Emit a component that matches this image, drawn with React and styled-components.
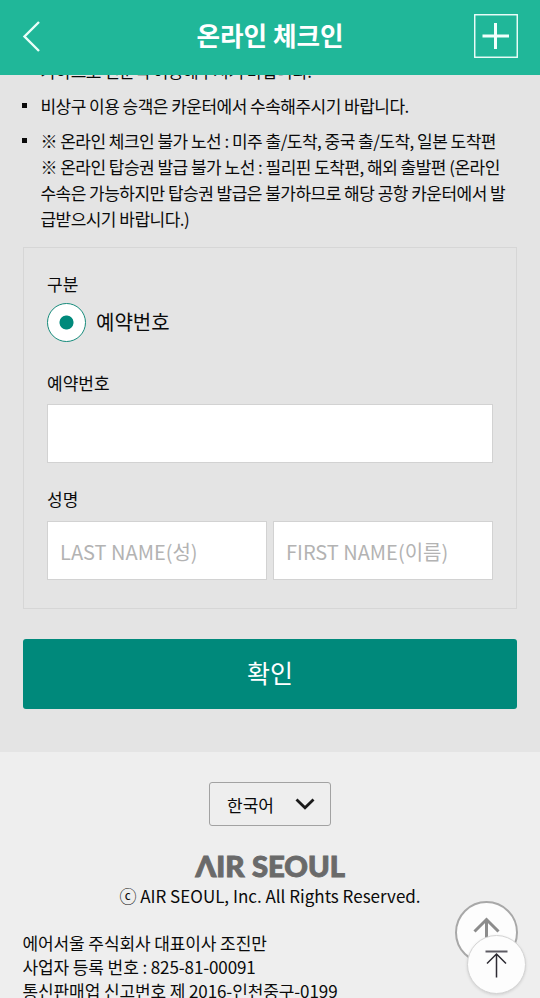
import React, { useState } from 'react'
import styled, { createGlobalStyle } from 'styled-components';

const GlobalStyle = createGlobalStyle`
  * {
    box-sizing: border-box;
  }
  body {
    margin: 0;
    color: #0a0a0a;
    background-color: #eeeeee;
    font-family: "Noto Sans CJK KR", sans-serif;
    overflow: hidden;
  }
`;

const Page = styled.div`
  height: 998px;
  display: flex;
  flex-direction: column;
  overflow: hidden;
`;

const Header = styled.header`
  flex: none;
  height: 75px;
  padding: 0 22px;
  display: grid;
  grid-template-columns: 44px 1fr 44px;
  align-items: center;
  background-color: #20b799;
  z-index: 1;
`;

const Title = styled.h1`
  margin: 0;
  padding-bottom: 5px;
  font-size: 25.6px;
  font-weight: 700;
  line-height: 36px;
  text-align: center;
  color: white;
`;

const IconButton = styled.button`
  display: flex;
  padding: 0 0 3px;
  border: none;
  background: none;
  cursor: pointer;
`;

const Content = styled.main`
  flex: none;
  height: 677px;
  padding: 0 23px;
  background-color: #e4e4e4;
`;

const Notices = styled.ul`
  margin: -17px 0 0 -1px;
  padding: 0;
  list-style: none;
`;

const Notice = styled.li`
  display: flex;
  gap: 13.4px;
  margin-bottom: 9px;
  font-size: 17px;
  line-height: 26px;
  letter-spacing: -0.52px;
  white-space: nowrap;
  &::before {
    content: "";
    flex: none;
    width: 5px;
    height: 5px;
    margin-top: 10px;
    background-color: #0a0a0a;
  }
`;

const Panel = styled.form`
  height: 362px;
  margin-top: 15px;
  padding: 23px 23px 0;
  border: 1px solid #d6d6d6;
`;

const Label = styled.div`
  height: 26px;
  margin-top: ${(props) => props.$top || 0}px;
  font-size: 17px;
  line-height: 26px;
`;

const RadioLabel = styled.label`
  display: flex;
  align-items: center;
  gap: 10.5px;
  margin: 6px 0 0 -0.5px;
  height: 38px;
  font-size: 20px;
  line-height: 38px;
`;

const Radio = styled.input`
  appearance: none;
  width: 39px;
  height: 39px;
  margin: 0;
  border: 1.5px solid #178c7c;
  border-radius: 50%;
  background: radial-gradient(circle, #00897b 6.6px, white 7.4px);
`;

const Fields = styled.div`
  display: flex;
  gap: 6px;
  margin-top: ${(props) => props.$top}px;
`;

const Input = styled.input`
  flex: 1;
  min-width: 0;
  height: 59px;
  padding: 2px 12px 0;
  border: 1px solid #d2d2d2;
  border-radius: 0;
  background-color: white;
  font-family: inherit;
  font-size: 20px;
  &::placeholder {
    color: #b3b3b3;
  }
`;

const Submit = styled.button`
  width: 100%;
  height: 70px;
  margin-top: 30px;
  padding: 0 0 4px;
  border: none;
  border-radius: 3px;
  background-color: #00897b;
  color: white;
  font-family: inherit;
  font-size: 25px;
  cursor: pointer;
`;

const Footer = styled.footer`
  flex: 1;
  display: flex;
  flex-direction: column;
  align-items: center;
  padding-top: 30px;
  background-color: #eeeeee;
`;

const Language = styled.button`
  flex: none;
  display: flex;
  align-items: center;
  justify-content: space-between;
  width: 122px;
  height: 44px;
  padding: 0 15px 0 17px;
  border: 1px solid #a2a2a2;
  border-radius: 3px;
  background: none;
  color: #0a0a0a;
  font-family: inherit;
  font-size: 17px;
`;

const Logo = styled.svg`
  flex: none;
  margin-top: 20px;
  overflow: visible;
  font-family: Lato, sans-serif;
  font-size: 27.5px;
  font-weight: 900;
`;

const Copyright = styled.p`
  margin: 3px 0 0;
  font-size: 17px;
  line-height: 26px;
  white-space: nowrap;
`;

const Company = styled.div`
  align-self: stretch;
  margin-top: 22px;
  padding-left: 22.5px;
  font-size: 17px;
  line-height: 24.2px;
  letter-spacing: -0.1px;
  white-space: nowrap;
`;

const TopButton = styled.button`
  position: absolute;
  left: ${(props) => props.$left}px;
  top: ${(props) => props.$top}px;
  width: ${(props) => props.$size}px;
  height: ${(props) => props.$size}px;
  padding: 0;
  border: ${(props) => props.$border};
  border-radius: 50%;
  background-color: #fdfdfd;
  box-shadow: ${(props) => props.$shadow || 'none'};
  display: flex;
  align-items: center;
  justify-content: center;
`;

const notices = [
    ['가하므로 신분석 이용해주시기 바랍니다.'],
    ['비상구 이용 승객은 카운터에서 수속해주시기 바랍니다.'],
    [
        '※ 온라인 체크인 불가 노선 : 미주 출/도착, 중국 출/도착, 일본 도착편',
        '※ 온라인 탑승권 발급 불가 노선 : 필리핀 도착편, 해외 출발편 (온라인',
        '수속은 가능하지만 탑승권 발급은 불가하므로 해당 공항 카운터에서 발',
        '급받으시기 바랍니다.)',
    ],
];

const App = () => {

    const [input, setInput] = useState({
        reservation: '',
        lastName: '',
        firstName: '',
    });

    const handleInputChange = (e) => {
        setInput({
            ...input,
            [e.target.name]: e.target.value
        });
    }

    return (
        <Page>
            <GlobalStyle />
            <Header>
                <IconButton>
                    <svg width="20" height="32" viewBox="0 0 20 32" fill="none" stroke="#e9fff9" strokeWidth="2.4">
                        <path d="M17 2 L2.5 16.5 L17 31" />
                    </svg>
                </IconButton>
                <Title>온라인 체크인</Title>
                <IconButton>
                    <svg width="44" height="44" viewBox="0 0 44 44" fill="none" stroke="#f2fffc">
                        <rect x="0.75" y="0.75" width="42.5" height="42.5" strokeWidth="1.4" />
                        <path d="M8.5 22 H35 M21.5 9 V35" strokeWidth="3" />
                    </svg>
                </IconButton>
            </Header>
            <Content>
                <Notices>
                    {notices.map((lines) => (
                        <Notice key={lines[0]}>
                            <div>
                                {lines.map((line) => <div key={line}>{line}</div>)}
                            </div>
                        </Notice>
                    ))}
                </Notices>
                <Panel onSubmit={(e) => e.preventDefault()}>
                    <Label>구분</Label>
                    <RadioLabel>
                        <Radio type='radio' name='type' defaultChecked />
                        예약번호
                    </RadioLabel>
                    <Label $top={29}>예약번호</Label>
                    <Fields $top={8}>
                        <Input
                            name='reservation'
                            value={input.reservation}
                            onChange={handleInputChange}
                        />
                    </Fields>
                    <Label $top={23}>성명</Label>
                    <Fields $top={9}>
                        <Input
                            name='lastName'
                            value={input.lastName}
                            onChange={handleInputChange}
                            placeholder='LAST NAME(성)'
                        />
                        <Input
                            name='firstName'
                            value={input.firstName}
                            onChange={handleInputChange}
                            placeholder='FIRST NAME(이름)'
                        />
                    </Fields>
                </Panel>
                <Submit>확인</Submit>
            </Content>
            <Footer>
                <Language>
                    한국어
                    <svg width="20" height="12" viewBox="0 0 20 12" fill="none" stroke="#1a1a1a" strokeWidth="2.8">
                        <path d="M1.5 1.5 L10 9.8 L18.5 1.5" />
                    </svg>
                </Language>
                <Logo width="152" height="34" viewBox="0 0 152 34" fill="#6a6a6a" stroke="#6a6a6a" strokeWidth="0.9">
                    <text x="1.5" y="30.5" textLength="49" lengthAdjust="spacingAndGlyphs">ΛIR</text>
                    <text x="58" y="30.5" textLength="93" lengthAdjust="spacingAndGlyphs">SEOUL</text>
                </Logo>
                <Copyright>ⓒ AIR SEOUL, Inc. All Rights Reserved.</Copyright>
                <Company>
                    <div>에어서울 주식회사 대표이사 조진만</div>
                    <div>사업자 등록 번호 : 825-81-00091</div>
                    <div>통신판매업 신고번호 제 2016-인천중구-0199</div>
                </Company>
            </Footer>
            <TopButton $left={455} $top={901} $size={63} $border='2px solid #a8a8a8'>
                <svg width="28" height="36" viewBox="0 0 28 36" fill="none" stroke="#8c8c8c" strokeWidth="3">
                    <path d="M1.5 16.5 L13.5 4.5 L25.5 16.5 M13.5 4.5 V36" />
                </svg>
            </TopButton>
            <TopButton $left={467} $top={935} $size={59} $border='1px solid #d4d4d4' $shadow='0 1px 3px rgba(0, 0, 0, 0.12)'>
                <svg width="24" height="30" viewBox="0 0 24 30" fill="none" stroke="#2d2b33" strokeWidth="1.5">
                    <path d="M0.5 1.5 H22.5" stroke="#5e5c64" strokeWidth="2" />
                    <path d="M2 13.5 L11.5 4 L21 13.5 M11.5 4 V27.5" />
                </svg>
            </TopButton>
        </Page>
    );
};

export default App;
